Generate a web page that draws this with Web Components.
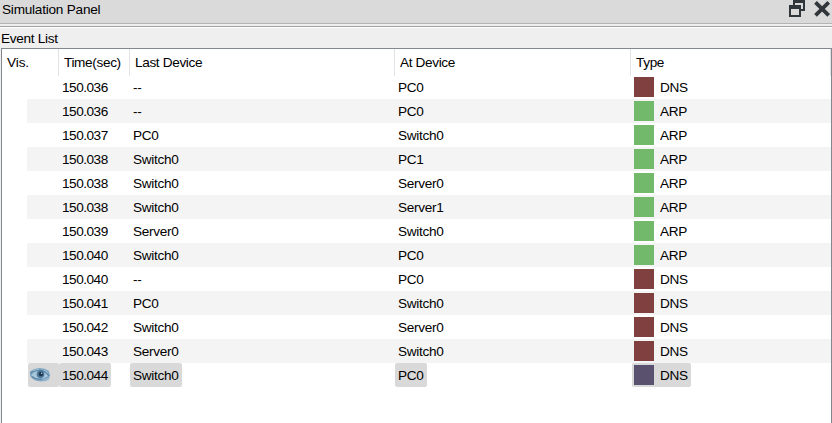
<!DOCTYPE html>
<html lang="en"><head><meta charset="utf-8"><title>Simulation Panel</title>
<style>html,body{margin:0;height:100%;overflow:hidden;background:#efefef}body{font:13.6px/24px "Liberation Sans",Arial,sans-serif;color:#000}</style></head><body>
<simulation-panel></simulation-panel>
<script>
class PanelTitle extends HTMLElement{constructor(){super();this.attachShadow({mode:'open'}).innerHTML=`
<style>:host{display:flex;box-sizing:border-box;background:#dadada;border-bottom:1px solid #b4b4b4;height:24px;justify-content:space-between}
span{line-height:19px;padding-left:2px;letter-spacing:-.23px}svg{display:block}</style>
<span><slot></slot></span>
<svg width="46" height="20" viewBox="0 0 46 20"><path fill="#31363b" fill-rule="evenodd" d="M7 0H19V11H15V9H17V3H9V5H7ZM3 5H15V17H3ZM5 9V15H13V9Z"/><path stroke="#31363b" stroke-width="3.8" d="M29.5 2.3L42.7 15.3M42.7 2.3L29.5 15.3"/></svg>`}}
customElements.define('panel-title',PanelTitle);

class EyeIcon extends HTMLElement{constructor(){super();this.attachShadow({mode:'open'}).innerHTML=`
<style>:host{display:block;width:22px;height:16px}svg{display:block}</style>
<svg width="22" height="16" viewBox="0 0 22 16"><path fill="#83a9c5" d="M1 4.5Q4 1.5 10 1Q16 1 20 4L21 8L20 12.5Q17 14.5 12 14.5Q4 14 1 9Z"/><path fill="#a9c8dc" d="M2.5 8Q5 4.5 11 4Q16 5 19 9Q14 12 9 12Q5 11.5 2.5 8Z"/><path fill="none" stroke="#5b83a3" stroke-width="1.2" d="M1.5 6.5Q5 3 11 3Q17 4 20 9M3 9.5Q7 13 13 12"/><path stroke="#9fc0d6" stroke-width="1" d="M4 3.5L10 2M15 3L19 6M14 13.5L20 11.5"/><circle cx="11.5" cy="7.3" r="3.8" fill="#4b7697"/><circle cx="12" cy="7" r="2.3" fill="#1c3853"/><circle cx="12.7" cy="6.2" r=".8" fill="#b5d0e2"/></svg>`}}
customElements.define('eye-icon',EyeIcon);

class EventHeader extends HTMLElement{constructor(){super();this.attachShadow({mode:'open'}).innerHTML=`
<style>:host{display:grid;grid-template-columns:57px 71px 265px 236px 200px;height:26px;line-height:27px;letter-spacing:-.35px}
span{box-sizing:border-box;border-right:1px solid #e3e3e3;padding-left:5px;white-space:nowrap}</style>
<span style="letter-spacing:-.1px">Vis.</span><span>Time(sec)</span><span>Last Device</span><span>At Device</span><span>Type</span>`}}
customElements.define('event-header',EventHeader);

class EventRow extends HTMLElement{connectedCallback(){const a=n=>this.getAttribute(n);
this.attachShadow({mode:'open'}).innerHTML=`
<style>:host{display:grid;grid-template-columns:26px 31px 71px 265px 237px 1fr;height:24px;line-height:25px;white-space:nowrap;letter-spacing:-.28px}
:host(:nth-of-type(even)){background:linear-gradient(90deg,#fff 25px,#f4f4f4 25px)}
span{box-sizing:border-box;justify-self:start;padding:0 3px;border-radius:2px;height:24px}
.time{letter-spacing:-.48px;padding-right:3.5px}
.type{display:flex;align-items:center;gap:6px;padding-left:2px;padding-right:3px}
i{width:20px;height:20px;background:${a('color')}}
.eye{justify-self:stretch;padding:4px 0 0 1px}
:host([selected]) span{background:#d9d9d9}
</style><b></b><span class="eye">${this.hasAttribute('selected')?'<eye-icon></eye-icon>':''}</span><span class="time">${a('time')}</span><span>${a('last')}</span><span>${a('at')}</span><span class="type"><i></i>${a('type')}</span>`}}
customElements.define('event-row',EventRow);

class SimulationPanel extends HTMLElement{constructor(){super();
const D='DNS',A='ARP',rows=[['036','--','PC0',D],['036','--','PC0',A],['037','PC0','Switch0',A],['038','Switch0','PC1',A],['038','Switch0','Server0',A],['038','Switch0','Server1',A],['039','Server0','Switch0',A],['040','Switch0','PC0',A],['040','--','PC0',D],['041','PC0','Switch0',D],['042','Switch0','Server0',D],['043','Server0','Switch0',D],['044','Switch0','PC0',D]];
this.attachShadow({mode:'open'}).innerHTML=`
<style>:host{display:flex;flex-direction:column;height:423px;width:832px}
.rule{height:4px;box-sizing:border-box;background:#efefef;border-bottom:1px solid #fff;box-shadow:inset 0 -1px #a0a0a0}
.label{height:20px;line-height:21px;padding-left:1px;letter-spacing:-.3px}
.table{flex:1;background:#fff;border:1px solid #828790;border-bottom:0;margin-left:1px}</style>
<panel-title>Simulation Panel</panel-title><div class="rule"></div><div class="label">Event List</div>
<div class="table"><event-header></event-header>${rows.map((r,i)=>`<event-row time="150.${r[0]}" last="${r[1]}" at="${r[2]}" type="${r[3]}" color="${i===12?'#5a516e':r[3]===D?'#804040':'#73b96b'}" ${i===12?'selected':''}></event-row>`).join('')}</div>`}}
customElements.define('simulation-panel',SimulationPanel);
</script></body></html>
